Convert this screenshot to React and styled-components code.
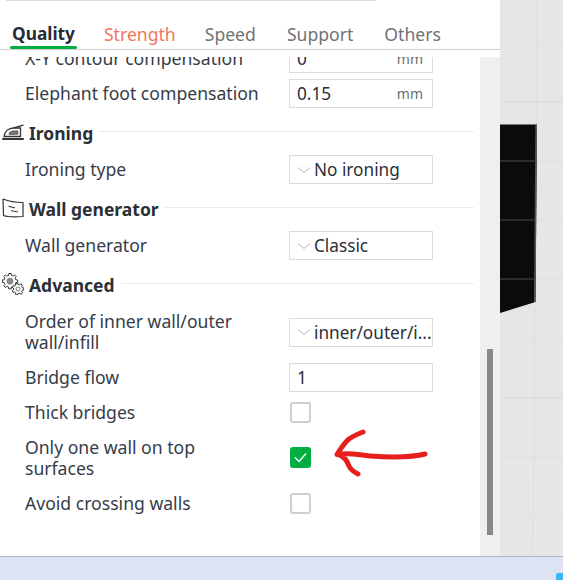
import React from "react";
import styled, { createGlobalStyle } from "styled-components";

const GlobalStyle = createGlobalStyle`
  html, body {
    margin: 0;
    padding: 0;
    background: #fff;
  }
`;

const FONT = `"Noto Sans", "Open Sans", sans-serif`;

const Page = styled.div`
  position: relative;
  width: 563px;
  height: 580px;
  overflow: hidden;
  display: flex;
  flex-direction: column;
  font-family: ${FONT};
`;
const Main = styled.div`
  flex: 1;
  min-height: 0;
  display: flex;
`;
const Sidebar = styled.div`
  width: 500px;
  flex: none;
  display: flex;
  flex-direction: column;
  background: #fff;
`;
const TopLine = styled.div`
  width: 370px;
  height: 1px;
  margin-left: 6px;
  background: #dcdcdc;
`;
const Tabs = styled.div`
  height: 49px;
  box-sizing: border-box;
  border-bottom: 1px solid #d0d0d0;
  display: flex;
  align-items: flex-end;
  padding-left: 10px;
`;
const Tab = styled.div`
  position: relative;
  height: 27px;
  padding: 0 2px;
  margin-right: ${(p) => p.$gap}px;
  font-size: ${(p) => (p.$active ? 17.3 : 17.6)}px;
  line-height: 24px;
  font-weight: ${(p) => (p.$active ? 700 : 400)};
  color: ${(p) => p.$color};
  ${(p) =>
    p.$active &&
    `
    &::after {
      content: "";
      position: absolute;
      left: 0;
      right: 0;
      bottom: 0;
      height: 3px;
      border-radius: 2px;
      background: #00ae42;
    }
  `}
`;
const TabGap = styled.div`
  height: 7px;
  flex: none;
`;
const Body = styled.div`
  flex: 1;
  min-height: 0;
  display: flex;
`;
const Scroller = styled.div`
  width: 480px;
  flex: none;
  overflow: hidden;
`;
const List = styled.div`
  margin-top: -16px;
`;
const Track = styled.div`
  width: 20px;
  flex: none;
  background: #efefef;
  display: flex;
  justify-content: center;
`;
const Thumb = styled.div`
  width: 6px;
  height: 186px;
  margin-top: 292px;
  background: #888;
`;
const Heading = styled.div`
  height: 41px;
  display: flex;
  align-items: center;
  padding: 0 6px 0 2px;
`;
const HeadingIcon = styled.svg`
  width: 22px;
  height: 22px;
  flex: none;
  margin-right: 5px;
`;
const HeadingText = styled.span`
  font-size: 17.5px;
  font-weight: 700;
  color: #2b2f36;
  margin-right: 6px;
  padding-top: 2px;
`;
const HeadingRule = styled.div`
  flex: 1;
  height: 1px;
  background: #ececec;
`;
const Row = styled.div`
  height: ${(p) => p.$h || 35}px;
  display: flex;
  align-items: center;
  padding-left: 25px;
`;
const Label = styled.div`
  width: 264px;
  flex: none;
  font-size: 17.6px;
  line-height: 21px;
  color: #363c48;
`;
const Field = styled.div`
  width: 144px;
  height: 29px;
  box-sizing: border-box;
  border: 1px solid #dbdbdb;
  display: flex;
  align-items: center;
  justify-content: space-between;
  padding: 0 9px 0 7px;
  font-size: 17.2px;
  color: #2a2f38;
  white-space: nowrap;
`;
const Unit = styled.span`
  font-size: 14px;
  color: #6e6e6e;
`;
const SelectField = styled(Field)`
  justify-content: flex-start;
  padding: 0 0 0 7px;
`;
const Chevron = styled.svg`
  width: 14px;
  height: 8px;
  flex: none;
  margin-right: 3px;
`;
const Check = styled.div`
  width: 21px;
  height: 21px;
  margin-left: 1px;
  box-sizing: border-box;
  border-radius: 3px;
  border: 2px solid ${(p) => (p.$on ? "#00ae42" : "#cfcfcf")};
  background: ${(p) => (p.$on ? "#00ae42" : "#fff")};
  display: flex;
  align-items: center;
  justify-content: center;
`;
const Viewport = styled.svg`
  flex: 1;
  min-width: 0;
  height: 100%;
  display: block;
`;
const TaskBar = styled.div`
  height: 24px;
  flex: none;
  box-sizing: border-box;
  border-top: 1px solid #b4b8c4;
  background: #dde3f3;
  display: flex;
  justify-content: flex-end;
  align-items: flex-end;
`;
const TaskIcon = styled.div`
  width: 7px;
  height: 7px;
  border-top-left-radius: 2px;
  background: #39b6f4;
`;
const Arrow = styled.svg`
  position: absolute;
  left: 0;
  top: 0;
  width: 563px;
  height: 580px;
  pointer-events: none;
`;

const gearPath = (cx, cy, outer, inner, teeth) => {
  const step = (Math.PI * 2) / teeth;
  let d = "";
  for (let i = 0; i < teeth; i++) {
    const a = i * step;
    const pts = [
      [inner, a - step * 0.5],
      [inner, a - step * 0.3],
      [outer, a - step * 0.2],
      [outer, a + step * 0.2],
      [inner, a + step * 0.3],
    ];
    pts.forEach(([r, t], j) => {
      const x = (cx + r * Math.cos(t)).toFixed(2);
      const y = (cy + r * Math.sin(t)).toFixed(2);
      d += `${i === 0 && j === 0 ? "M" : "L"}${x} ${y} `;
    });
  }
  return d + "Z";
};

const IronIcon = () => (
  <HeadingIcon viewBox="0 0 22 22">
    <path d="M1 18H21" stroke="#333" strokeWidth="2" strokeLinecap="round" fill="none" />
    <path d="M2 15.5C2.5 11 6 7.5 11 7H18.5V15.5Z" stroke="#333" strokeWidth="1.3" fill="none" />
    <path d="M7 13.2C7.5 11.2 9 10 11.5 10H15.8V13.2Z" fill="#808080" stroke="#333" strokeWidth="0.8" />
    <path d="M12 6.8L21 4.2" stroke="#333" strokeWidth="1.3" strokeLinecap="round" />
  </HeadingIcon>
);

const WallIcon = () => (
  <HeadingIcon viewBox="0 0 22 22">
    <path
      d="M1 2C7 4.5 14 5.5 21 5.5V19.5C15 20 7 20.5 1.5 18.5Z"
      stroke="#333"
      strokeWidth="1.2"
      fill="none"
      strokeLinejoin="round"
    />
    <path d="M6.5 9.5C9 8.5 10 11.5 13 10.5" stroke="#444" strokeWidth="1.1" fill="none" />
    <path d="M9 14C11.5 13 13 15.5 16 14.5" stroke="#444" strokeWidth="1.1" fill="none" />
  </HeadingIcon>
);

const GearIcon = () => (
  <HeadingIcon viewBox="0 0 22 22">
    <path d={gearPath(8, 8.2, 7.8, 6, 8)} stroke="#333" strokeWidth="1" fill="#fff" strokeLinejoin="round" />
    <circle cx="8" cy="8.2" r="3" fill="#8c8c8c" stroke="#666" strokeWidth="0.7" />
    <path d={gearPath(16, 16, 6, 4.5, 7)} stroke="#333" strokeWidth="1" fill="#fff" strokeLinejoin="round" />
    <circle cx="16" cy="16" r="2" fill="none" stroke="#666" strokeWidth="0.8" />
  </HeadingIcon>
);

const Section = ({ icon, title }) => (
  <Heading>
    {icon}
    <HeadingText>{title}</HeadingText>
    <HeadingRule />
  </Heading>
);

const Input = ({ value, unit }) => (
  <Field>
    <span>{value}</span>
    {unit && <Unit>{unit}</Unit>}
  </Field>
);

const Select = ({ value }) => (
  <SelectField>
    <Chevron viewBox="0 0 14 8">
      <path d="M1 1.5L7 6.5L13 1.5" stroke="#b4b4b4" strokeWidth="1" fill="none" />
    </Chevron>
    <span>{value}</span>
  </SelectField>
);

const Checkbox = ({ on }) => (
  <Check $on={on}>
    {on && (
      <svg width="13" height="11" viewBox="0 0 13 11">
        <path d="M1 5.5L5 9.5L12 1.5" stroke="#fff" strokeWidth="1.4" fill="none" />
      </svg>
    )}
  </Check>
);

const H_LINES = [43, 102, 161, 220, 279, 339, 398, 457, 517];

export default function App() {
  return (
    <Page>
      <GlobalStyle />
      <Main>
        <Sidebar>
          <TopLine />
          <Tabs>
            <Tab $active $color="#262c33" $gap={25}>Quality</Tab>
            <Tab $color="#f2755f" $gap={25}>Strength</Tab>
            <Tab $color="#6f7276" $gap={27}>Speed</Tab>
            <Tab $color="#6f7276" $gap={27}>Support</Tab>
            <Tab $color="#6f7276" $gap={0}>Others</Tab>
          </Tabs>
          <TabGap />
          <Body>
            <Scroller>
              <List>
                <Row>
                  <Label>X-Y contour compensation</Label>
                  <Input value="0" unit="mm" />
                </Row>
                <Row>
                  <Label>Elephant foot compensation</Label>
                  <Input value="0.15" unit="mm" />
                </Row>
                <Section icon={<IronIcon />} title="Ironing" />
                <Row>
                  <Label>Ironing type</Label>
                  <Select value="No ironing" />
                </Row>
                <Section icon={<WallIcon />} title="Wall generator" />
                <Row>
                  <Label>Wall generator</Label>
                  <Select value="Classic" />
                </Row>
                <Section icon={<GearIcon />} title="Advanced" />
                <Row $h={56}>
                  <Label>
                    Order of inner wall/outer
                    <br />
                    wall/infill
                  </Label>
                  <Select value="inner/outer/i..." />
                </Row>
                <Row>
                  <Label>Bridge flow</Label>
                  <Input value="1" />
                </Row>
                <Row>
                  <Label>Thick bridges</Label>
                  <Checkbox />
                </Row>
                <Row $h={55}>
                  <Label>
                    Only one wall on top
                    <br />
                    surfaces
                  </Label>
                  <Checkbox on />
                </Row>
                <Row $h={36}>
                  <Label>Avoid crossing walls</Label>
                  <Checkbox />
                </Row>
              </List>
            </Scroller>
            <Track>
              <Thumb />
            </Track>
          </Body>
        </Sidebar>
        <Viewport viewBox="500 0 63 556" preserveAspectRatio="none">
          <rect x="500" y="0" width="63" height="556" fill="#e6e6e6" />
          {H_LINES.map((y) => (
            <line
              key={y}
              x1="500"
              x2="563"
              y1={y}
              y2={y}
              stroke={y === 102 || y === 398 ? "#d9d9d9" : "#e0e0e0"}
              strokeWidth="1"
            />
          ))}
          <line x1="537" y1="0" x2="533" y2="556" stroke="#dedede" strokeWidth="1" />
          <path d="M500 124.5H537L535.5 302L500 313Z" fill="#0b0b0b" />
          <path d="M536.2 125L534.8 302" stroke="#555" strokeWidth="1.6" fill="none" />
          <path d="M500 161H536M500 220H535.5M500 279H535" stroke="#4a4a4a" strokeWidth="1" />
        </Viewport>
      </Main>
      <TaskBar>
        <TaskIcon />
      </TaskBar>
      <Arrow viewBox="0 0 563 580">
        <path
          d="M425 454C410 458 385 457 370 456C358 455 350 452 337 454.5C341 448 345 442 349 439C353 436 358 434 363 432M339 455C345 457 347 461 349 466C351 470 354 472 358 474"
          stroke="#e61e1c"
          strokeWidth="5"
          fill="none"
          strokeLinecap="round"
          strokeLinejoin="round"
        />
      </Arrow>
    </Page>
  );
}
